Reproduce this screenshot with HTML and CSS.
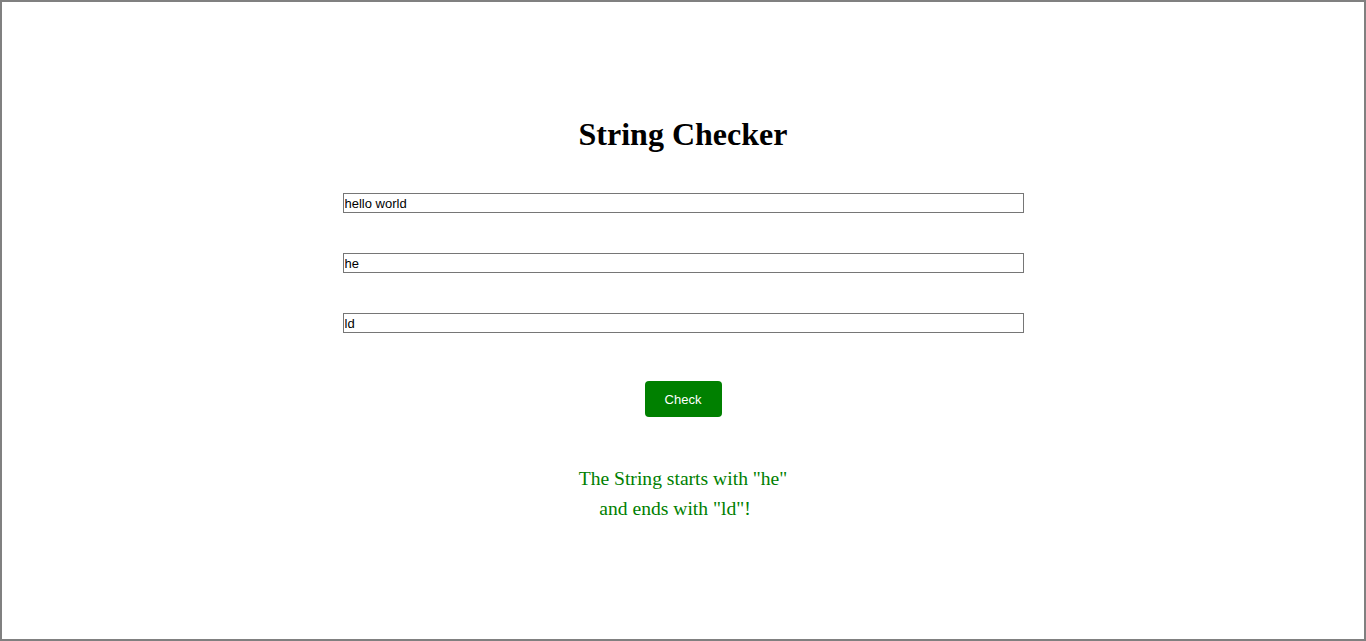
FILE: index.html
```html
<!DOCTYPE html>
<html>
<head>
<meta charset="utf-8">
<title>String Checker</title>
<link rel="stylesheet" href="styles.css">
</head>
<body>
<div class="page">
  <h1 class="title">String Checker</h1>
  <input class="field" type="text" value="hello world">
  <input class="field" type="text" value="he">
  <input class="field" type="text" value="ld">
  <button class="check" type="button">Check</button>
  <p class="result"><span class="line">The String starts with "he"</span><span class="line line-two">and ends with "ld"!</span></p>
</div>
</body>
</html>
```
FILE: styles.css
```css
html, body {
  margin: 0;
  padding: 0;
  background: #fff;
}
.page {
  box-sizing: border-box;
  width: 1366px;
  height: 641px;
  border: 2px solid #808080;
  padding-top: 114px;
  display: flex;
  flex-direction: column;
  align-items: center;
  font-family: "Liberation Serif", "Times New Roman", serif;
}
.title {
  margin: 0 0 40px;
  font-size: 32px;
  line-height: 37px;
  font-weight: bold;
  color: #000;
}
.field {
  box-sizing: border-box;
  width: 50%;
  height: 20px;
  margin: 0 0 40px;
  padding: 0 1px;
  border: 1px solid #767676;
  border-radius: 0;
  font-family: "Liberation Sans", Arial, sans-serif;
  font-size: 13px;
  color: #000;
  outline: none;
}
.field:last-of-type {
  margin-bottom: 48px;
}
.check {
  box-sizing: border-box;
  width: 77px;
  height: 36px;
  border: none;
  border-radius: 4px;
  background: #008000;
  color: #fff;
  font-family: "Liberation Sans", Arial, sans-serif;
  font-size: 13px;
  padding: 0;
  margin: 0 0 47px;
}
.result {
  margin: 0;
  color: #008000;
  font-size: 19.6px;
  line-height: 30px;
  text-align: center;
  display: flex;
  flex-direction: column;
  align-items: center;
}
.line-two {
  margin-right: 16px;
}
```
